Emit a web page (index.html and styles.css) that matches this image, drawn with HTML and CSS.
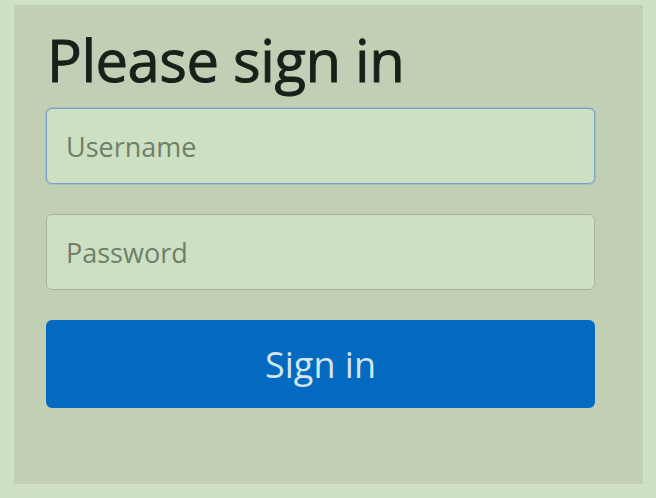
FILE: index.html
```html
<!DOCTYPE html>
<html>
<head>
<meta charset="utf-8">
<link rel="stylesheet" href="styles.css">
</head>
<body>
<div class="panel">
  <form class="form-signin">
    <h2 class="heading">Please sign in</h2>
    <input class="field field-focus" type="text" placeholder="Username">
    <input class="field" type="password" placeholder="Password">
    <button class="btn" type="button">Sign in</button>
  </form>
</div>
</body>
</html>
```
FILE: styles.css
```css
html, body {
  margin: 0;
  padding: 0;
}
body {
  background: #cfe0c4;
  width: 656px;
  height: 498px;
  overflow: hidden;
  font-family: "Open Sans", "Noto Sans", sans-serif;
}
.panel {
  margin: 5px 13px 0 14px;
  height: 479px;
  background: #c1d0b5;
  box-sizing: border-box;
  padding: 15px 48px 0 32px;
}
.form-signin {
  display: flex;
  flex-direction: column;
}
.heading {
  margin: 0 0 8px 1px;
  font-size: 58px;
  font-weight: 400;
  line-height: 80px;
  color: #172019;
  letter-spacing: -0.5px;
  -webkit-text-stroke: 0.9px #172019;
}
.field {
  box-sizing: border-box;
  height: 76px;
  width: 549px;
  margin: 0 0 30px 0;
  padding: 0 19px;
  background: #cee0c3;
  border: 1.5px solid #a6b79c;
  border-radius: 6px;
  font-family: inherit;
  font-size: 27px;
  color: #4d5a48;
  outline: none;
}
.field::placeholder {
  color: #6f7f69;
}
.field-focus {
  border-color: #74a3c6;
  box-shadow: 0 0 0 1px rgba(116, 163, 198, 0.35);
}
.btn {
  box-sizing: border-box;
  height: 88px;
  width: 549px;
  background: #0469c0;
  border: none;
  border-radius: 6px;
  color: #d3e6ea;
  font-family: inherit;
  font-size: 36px;
  cursor: pointer;
}
```
